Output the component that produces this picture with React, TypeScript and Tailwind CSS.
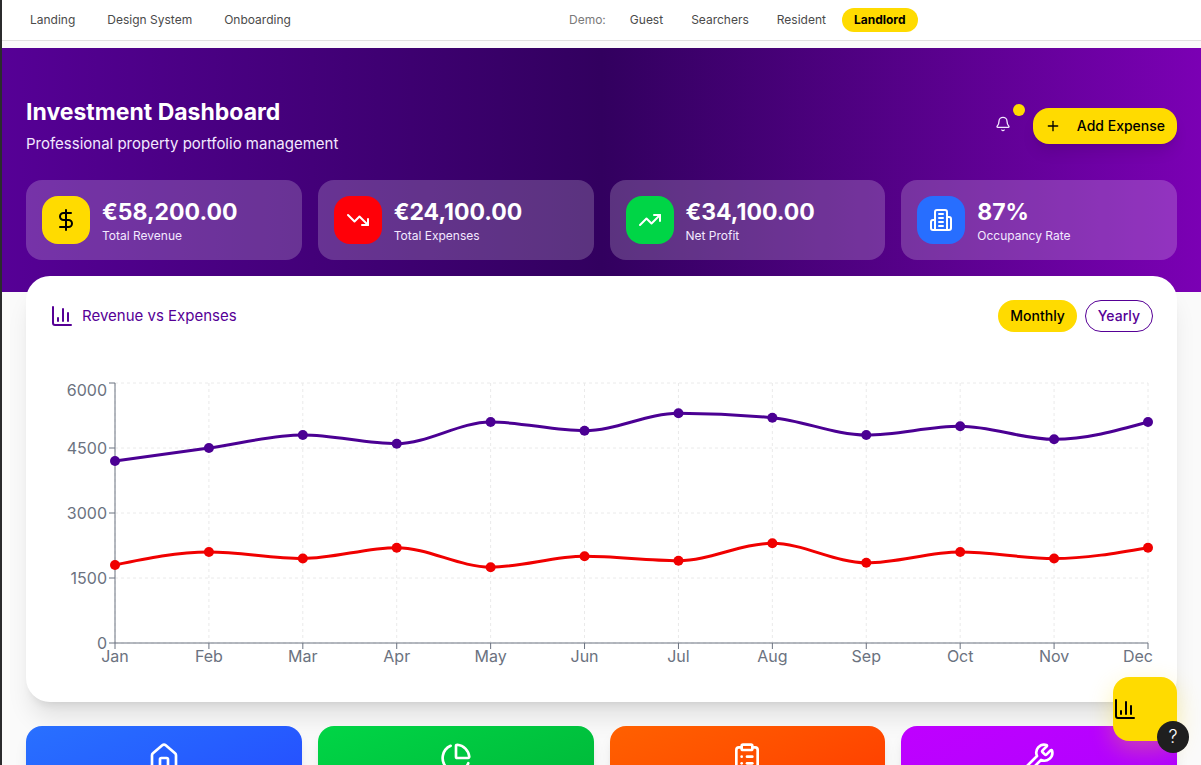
import type { ReactNode } from "react";
import {
  ChartColumn,
  ChartPie,
  ClipboardList,
  DollarSign,
  House,
  Plus,
  TrendingDown,
  TrendingUp,
  Wrench,
  Bell,
} from "lucide-react";

const months = ["Jan", "Feb", "Mar", "Apr", "May", "Jun", "Jul", "Aug", "Sep", "Oct", "Nov", "Dec"];
const revenue = [4200, 4500, 4800, 4600, 5100, 4900, 5300, 5200, 4800, 5000, 4700, 5100];
const expenses = [1800, 2100, 1950, 2200, 1750, 2000, 1900, 2300, 1850, 2100, 1950, 2200];

const LEFT = 65;
const RIGHT = 1098;
const TOP = 5;
const BOTTOM = 265;
const xAt = (i: number) => LEFT + ((RIGHT - LEFT) * i) / (months.length - 1);
const yAt = (v: number) => BOTTOM - ((BOTTOM - TOP) * v) / 6000;

function BuildingIcon() {
  return (
    <svg viewBox="0 0 24 24" className="size-6" fill="none" stroke="currentColor" strokeWidth="2" strokeLinecap="round" strokeLinejoin="round" aria-hidden="true">
      <path d="M6 22V4a2 2 0 0 1 2-2h8a2 2 0 0 1 2 2v18Z" />
      <path d="M6 12H4a2 2 0 0 0-2 2v6a2 2 0 0 0 2 2h2" />
      <path d="M18 9h2a2 2 0 0 1 2 2v9a2 2 0 0 1-2 2h-2" />
      <path d="M10 6h4M10 10h4M10 14h4M10 18h4" />
    </svg>
  );
}

/** Monotone cubic interpolation through evenly spaced samples. */
function curve(values: number[]) {
  const ys = values.map(yAt);
  const h = xAt(1) - xAt(0);
  const slopes = ys.slice(1).map((y, i) => (y - ys[i]) / h);
  const tangents = ys.map((_, i) => {
    if (i === 0 || i === ys.length - 1) return 0;
    const a = slopes[i - 1];
    const b = slopes[i];
    return (Math.sign(a) + Math.sign(b)) * Math.min(Math.abs(a), Math.abs(b), 0.25 * Math.abs(a + b));
  });
  tangents[0] = (3 * slopes[0] - tangents[1]) / 2;
  const n = ys.length - 1;
  tangents[n] = (3 * slopes[n - 1] - tangents[n - 1]) / 2;
  return ys.reduce((d, y, i) => {
    if (i === 0) return `M${xAt(0)},${y}`;
    const c1 = `${xAt(i - 1) + h / 3},${ys[i - 1] + (tangents[i - 1] * h) / 3}`;
    const c2 = `${xAt(i) - h / 3},${y - (tangents[i] * h) / 3}`;
    return `${d}C${c1} ${c2} ${xAt(i)},${y}`;
  }, "");
}

function Series({ values, color }: { values: number[]; color: string }) {
  return (
    <g>
      <path d={curve(values)} fill="none" stroke={color} strokeWidth="3" />
      {values.map((v, i) => (
        <circle key={months[i]} cx={xAt(i)} cy={yAt(v)} r="5" fill={color} />
      ))}
    </g>
  );
}

function RevenueChart() {
  return (
    <svg viewBox="0 0 1103 300" className="block w-full" role="img" aria-label="Revenue and expenses by month">
      <g stroke="#eaeaea" strokeDasharray="3 3">
        {[0, 1500, 3000, 4500, 6000].map((v) => (
          <line key={v} x1={LEFT} x2={RIGHT} y1={yAt(v)} y2={yAt(v)} />
        ))}
        {months.map((m, i) => (
          <line key={m} x1={xAt(i)} x2={xAt(i)} y1={TOP} y2={BOTTOM} />
        ))}
      </g>
      <g stroke="#6b7280">
        <line x1={LEFT} x2={RIGHT} y1={BOTTOM} y2={BOTTOM} />
        <line x1={LEFT} x2={LEFT} y1={TOP} y2={BOTTOM} />
        {months.map((m, i) => (
          <line key={m} x1={xAt(i)} x2={xAt(i)} y1={BOTTOM} y2={BOTTOM + 6} />
        ))}
        {[0, 1500, 3000, 4500, 6000].map((v) => (
          <line key={v} x1={LEFT - 6} x2={LEFT} y1={yAt(v)} y2={yAt(v)} />
        ))}
      </g>
      <g fill="#6b7280" fontSize="16">
        {months.map((m, i) => (
          <text key={m} x={i === 11 ? 1103 : xAt(i)} y={BOTTOM + 19} textAnchor={i === 11 ? "end" : "middle"}>
            {m}
          </text>
        ))}
        {[0, 1500, 3000, 4500, 6000].map((v) => (
          <text key={v} x={LEFT - 8} y={v === 6000 ? 18 : yAt(v) + 6} textAnchor="end">
            {v}
          </text>
        ))}
      </g>
      <Series values={revenue} color="#4b0093" />
      <Series values={expenses} color="#f00000" />
    </svg>
  );
}

function NavLink({ children }: { children: ReactNode }) {
  return (
    <a href="#" className="rounded-xl px-3 py-1 text-[#4a4a4a]">
      {children}
    </a>
  );
}

const stats = [
  { value: "€58,200.00", label: "Total Revenue", tile: "bg-[#ffdb00] text-black", icon: <DollarSign className="size-6" /> },
  { value: "€24,100.00", label: "Total Expenses", tile: "bg-[#ff0008] text-white", icon: <TrendingDown className="size-6" /> },
  { value: "€34,100.00", label: "Net Profit", tile: "bg-[#00d546] text-white", icon: <TrendingUp className="size-6" /> },
  { value: "87%", label: "Occupancy Rate", tile: "bg-[#276eff] text-white", icon: <BuildingIcon /> },
];

const actions = [
  { label: "Properties", tile: "from-[#2970ff] to-[#273fff]", icon: <House className="size-8" /> },
  { label: "Analytics", tile: "from-[#00d546] to-[#00b035]", icon: <ChartPie className="size-8" /> },
  { label: "Reports", tile: "from-[#ff6000] to-[#ff2c00]", icon: <ClipboardList className="size-8" /> },
  { label: "Maintenance", tile: "from-[#bf00ff] to-[#aa00ff]", icon: <Wrench className="size-8" /> },
];

export default function App() {
  return (
    <div className="h-screen overflow-hidden border-l-2 border-[#2b2b2d] bg-[#fafafa] font-['Inter',sans-serif]">
      <nav className="flex h-[41px] items-center border-b border-[#e0e0e0] bg-white px-4 pb-px text-xs">
        <div className="flex w-[551px] items-center gap-2">
          <NavLink>Landing</NavLink>
          <NavLink>Design System</NavLink>
          <NavLink>Onboarding</NavLink>
        </div>
        <div className="flex items-center gap-1">
          <span className="pr-2 text-[#7a7a7a]">Demo:</span>
          <NavLink>Guest</NavLink>
          <NavLink>Searchers</NavLink>
          <NavLink>Resident</NavLink>
          <a href="#" className="rounded-xl bg-[#ffdb00] px-3 py-1 font-bold text-black">
            Landlord
          </a>
        </div>
      </nav>

      <header className="mt-[7px] bg-linear-to-r from-[#560096] via-[#32005f] to-[#7b00b4] px-6 pt-12 pb-8">
        <div className="flex items-center justify-between">
          <div>
            <h1 className="text-[23px] leading-8 font-bold text-white">Investment Dashboard</h1>
            <p className="mt-1 text-[15px] leading-6 text-[#f3e8ff]">Professional property portfolio management</p>
          </div>
          <div className="flex items-center gap-2">
            <button type="button" aria-label="Notifications" className="relative flex h-9 w-11 items-start justify-center pt-2 text-[#f3e8ff]">
              <Bell className="size-4" />
              <span className="absolute -top-1 right-0 size-3 rounded-full bg-[#ffdb00]" />
            </button>
            <button type="button" className="flex h-9 items-center gap-4 rounded-2xl bg-[#ffdb00] px-3 text-sm font-medium text-black shadow-lg">
              <Plus className="size-4" />
              Add Expense
            </button>
          </div>
        </div>
        <div className="mt-6 grid grid-cols-4 gap-4">
          {stats.map((s) => (
            <div key={s.label} className="flex items-center gap-3 rounded-2xl bg-white/20 p-4">
              <div className={`flex size-12 shrink-0 items-center justify-center rounded-2xl ${s.tile}`}>{s.icon}</div>
              <div>
                <p className="text-[23px] leading-8 font-bold text-white">{s.value}</p>
                <p className="text-xs leading-4 text-[#f3e8ff]">{s.label}</p>
              </div>
            </div>
          ))}
        </div>
      </header>

      <main className="relative -mt-4 px-6">
        <section className="rounded-3xl bg-white p-6 shadow-xl">
          <div className="flex items-center justify-between">
            <h2 className="flex items-center gap-2 text-[15px] text-[#560096]">
              <ChartColumn className="size-6" />
              Revenue vs Expenses
            </h2>
            <div className="flex gap-2">
              <button type="button" className="h-8 rounded-2xl bg-[#ffdb00] px-3 text-sm font-medium text-black">
                Monthly
              </button>
              <button type="button" className="h-8 rounded-2xl border border-[#560096] px-3 text-sm font-medium text-[#560096]">
                Yearly
              </button>
            </div>
          </div>
          <div className="mt-[46px]">
            <RevenueChart />
          </div>
        </section>

        <div className="mt-6 grid grid-cols-4 gap-4">
          {actions.map((a) => (
            <button key={a.label} type="button" aria-label={a.label} className={`flex h-32 justify-center rounded-2xl bg-linear-to-br pt-4 text-white shadow-lg ${a.tile}`}>
              {a.icon}
            </button>
          ))}
        </div>
      </main>

      <button type="button" aria-label="Open analytics" className="fixed right-6 bottom-6 flex size-16 items-center rounded-2xl bg-[#ffdb00] text-black shadow-[0_8px_24px_rgba(255,219,0,0.3)]">
        <ChartColumn className="size-6" />
      </button>
      <button type="button" aria-label="Help" className="fixed right-3 bottom-3 size-8 rounded-full bg-[#1f1f1f] text-lg leading-8 font-light text-white">
        ?
      </button>
    </div>
  );
}
